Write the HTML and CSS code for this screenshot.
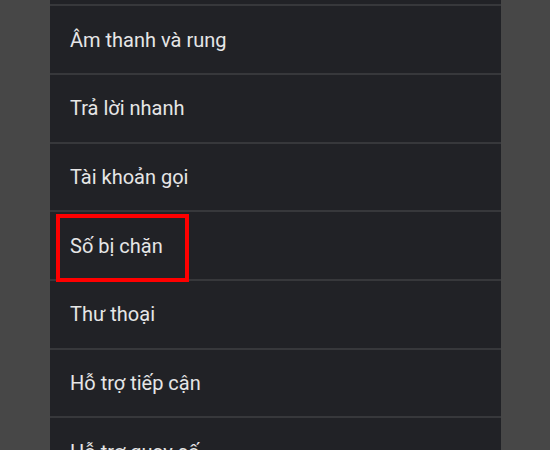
FILE: index.html
```html
<!DOCTYPE html>
<html lang="vi">
<head>
<meta charset="utf-8">
<link rel="stylesheet" href="styles.css">
</head>
<body>
<div class="panel">
  <div class="row row-top"></div>
  <div class="row"><span class="label">Âm thanh và rung</span></div>
  <div class="row"><span class="label">Trả lời nhanh</span></div>
  <div class="row"><span class="label">Tài khoản gọi</span></div>
  <div class="row row-marked"><span class="label">Số bị chặn</span><span class="highlight"></span></div>
  <div class="row"><span class="label">Thư thoại</span></div>
  <div class="row"><span class="label">Hỗ trợ tiếp cận</span></div>
  <div class="row"><span class="label">Hỗ trợ quay số</span></div>
</div>
</body>
</html>
```
FILE: styles.css
```css
html, body {
  margin: 0;
  padding: 0;
  height: 100%;
  overflow: hidden;
}
body {
  background: #474747;
  font-family: Roboto, "Noto Sans", sans-serif;
}
.panel {
  margin-left: 50px;
  width: 451px;
  height: 450px;
  background: #212226;
  display: flex;
  flex-direction: column;
}
.row {
  flex: none;
  height: 66.7px;
  border-bottom: 2px solid #37383b;
  display: flex;
  align-items: center;
  padding-left: 20px;
  position: relative;
}
.row-top {
  height: 4.3px;
}
.label {
  color: #e6e6e6;
  font-size: 20px;
  line-height: 24px;
}
.highlight {
  position: absolute;
  left: 6px;
  top: 1.5px;
  width: 125px;
  height: 60px;
  border: 4px solid #ff0000;
}
```
